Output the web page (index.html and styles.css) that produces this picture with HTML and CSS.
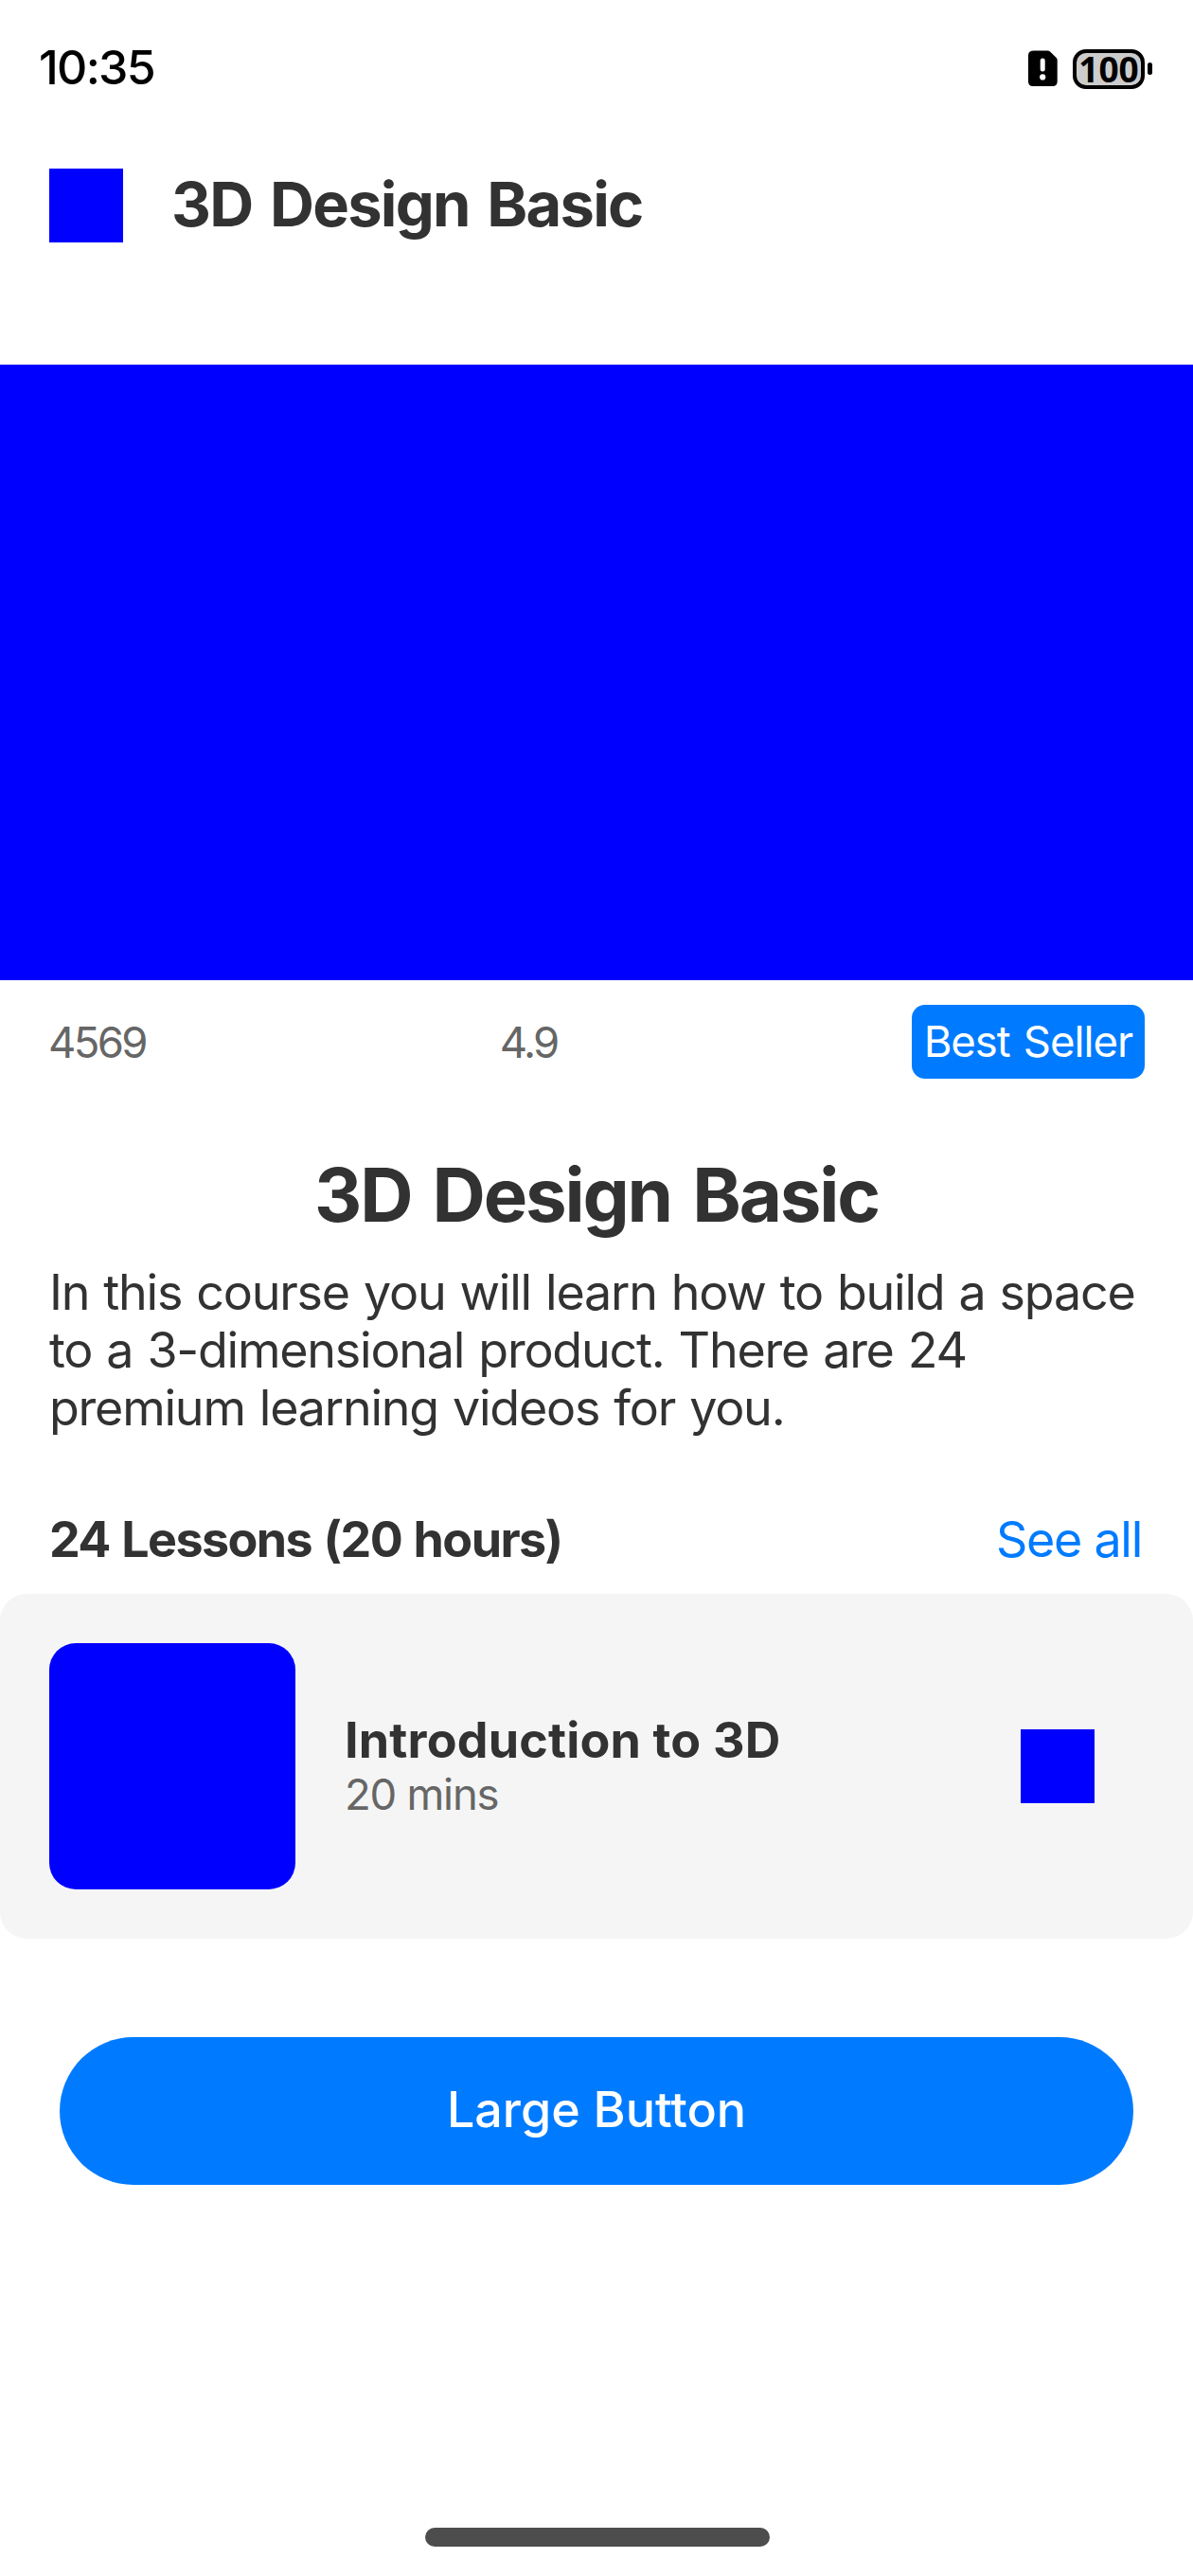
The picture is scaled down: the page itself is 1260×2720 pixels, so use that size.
FILE: index.html
```html
<!DOCTYPE html>
<html lang="en">
<head>
<meta charset="utf-8">
<title>3D Design Basic</title>
<link rel="stylesheet" href="styles.css">
</head>
<body>
<div class="status-bar">
  <span class="clock">10:35</span>
  <div class="status-icons">
    <svg class="sim" width="31" height="39" viewBox="0 0 31 39" aria-hidden="true">
      <path d="M6 0.5H20.5Q22 0.5 23 1.5L29.7 8Q30.7 9 30.7 10.5V33Q30.7 38 25.7 38H5Q0 38 0 33V5.5Q0 0.5 6 0.5Z" fill="#000"/>
      <path d="M15.2 11V20" stroke="#fff" stroke-width="5" stroke-linecap="round"/>
      <circle cx="15.2" cy="28.4" r="3.1" fill="#fff"/>
    </svg>
    <div class="battery"><span class="level">100</span></div>
    <span class="nub"></span>
  </div>
</div>
<header class="header">
  <div class="back"></div>
  <span class="header-title">3D Design Basic</span>
</header>
<div class="banner"></div>
<div class="stats">
  <span class="stat">4569</span>
  <span class="stat">4.9</span>
  <span class="badge">Best Seller</span>
</div>
<h1 class="title">3D Design Basic</h1>
<p class="description">In this course you will learn how to build a space to a 3-dimensional product. There are 24 premium learning videos for you.</p>
<div class="lessons-head">
  <span class="lessons-count">24 Lessons (20 hours)</span>
  <a class="see-all">See all</a>
</div>
<div class="lesson">
  <div class="thumb"></div>
  <div class="lesson-text">
    <span class="lesson-name">Introduction to 3D</span>
    <span class="lesson-time">20 mins</span>
  </div>
  <div class="play"></div>
</div>
<button class="large-button">Large Button</button>
<div class="home-indicator"></div>
</body>
</html>
```
FILE: styles.css
```css
* { box-sizing: border-box; }

body {
  display: flex;
  flex-direction: column;
  width: 1260px;
  height: 2720px;
  margin: 0;
  background: #fff;
  color: #323232;
  font-family: Inter, "Open Sans", sans-serif;
  font-size: 52px;
  overflow: hidden;
}

.status-bar {
  display: flex;
  justify-content: space-between;
  height: 126px;
  padding: 41px 43px 0 41px;
  color: #000;
}

.clock {
  font-size: 50px;
  font-weight: 500;
  line-height: 60px;
  letter-spacing: -1.7px;
}

.status-icons {
  display: flex;
  align-items: center;
  height: 63px;
}

.sim { margin-right: 16px; }

.battery {
  display: flex;
  align-items: center;
  justify-content: center;
  width: 76px;
  height: 42px;
  border: 4px solid #000;
  border-radius: 14px;
  background: #ccc;
}

.level {
  font-family: "Open Sans", sans-serif;
  font-size: 37px;
  font-weight: 700;
  line-height: 34px;
}

.nub {
  width: 5px;
  height: 13px;
  margin-left: 3px;
  border-radius: 3px;
  background: #000;
}

.header {
  display: flex;
  align-items: center;
  gap: 51px;
  height: 182px;
  padding: 0 52px;
}

.back,
.play {
  width: 78px;
  height: 78px;
  background: #00f;
}

.header-title {
  padding-bottom: 3px;
  font-size: 65px;
  font-weight: 700;
  line-height: 76px;
  letter-spacing: -1.76px;
  word-spacing: 5px;
}

.banner {
  height: 650px;
  margin-top: 77px;
  background: #00f;
}

.stats {
  display: flex;
  align-items: center;
  justify-content: space-between;
  height: 130px;
  padding: 0 51px;
  font-size: 45.5px;
}

.stat {
  color: #666;
  letter-spacing: -2.7px;
}

.badge {
  height: 78px;
  padding: 0 13px;
  border-radius: 14px;
  background: #007bff;
  color: #fff;
  line-height: 77px;
  letter-spacing: -1.05px;
  word-spacing: 2.5px;
}

.title {
  margin: 51px 0 0;
  font-size: 78px;
  font-weight: 700;
  line-height: 92px;
  letter-spacing: -2.18px;
  word-spacing: 6px;
  text-align: center;
}

.description {
  margin: 26px 0 0;
  padding: 0 52px;
  line-height: 61.2px;
  letter-spacing: -1.23px;
  word-spacing: 1.7px;
}

.lessons-head {
  display: flex;
  justify-content: space-between;
  margin-top: 77px;
  padding: 0 54px 0 52px;
  line-height: 61px;
}

.lessons-count {
  font-weight: 700;
  letter-spacing: -1.6px;
  word-spacing: 1.7px;
}

.see-all {
  color: #007bff;
  letter-spacing: -1.27px;
}

.lesson {
  display: flex;
  align-items: center;
  height: 364px;
  margin-top: 27px;
  padding: 0 104px 0 52px;
  border-radius: 28px;
  background: #f5f5f5;
}

.thumb {
  width: 260px;
  height: 260px;
  border-radius: 28px;
  background: #00f;
}

.lesson-text {
  display: flex;
  flex: 1;
  flex-direction: column;
  padding: 0 0 2px 52px;
}

.lesson-name {
  font-weight: 700;
  line-height: 61px;
  letter-spacing: 0.18px;
}

.lesson-time {
  color: #666;
  font-size: 45.5px;
  line-height: 53px;
  letter-spacing: -1.25px;
}

.large-button {
  height: 156px;
  margin: 104px 63px 0;
  padding: 0 0 2px;
  border: 0;
  border-radius: 78px;
  background: #007bff;
  color: #fff;
  font: 500 52px/61px Inter, "Open Sans", sans-serif;
}

.home-indicator {
  width: 364px;
  height: 20px;
  margin: auto 447px 31px 449px;
  border-radius: 10px;
  background: #4d4d4d;
}
```
